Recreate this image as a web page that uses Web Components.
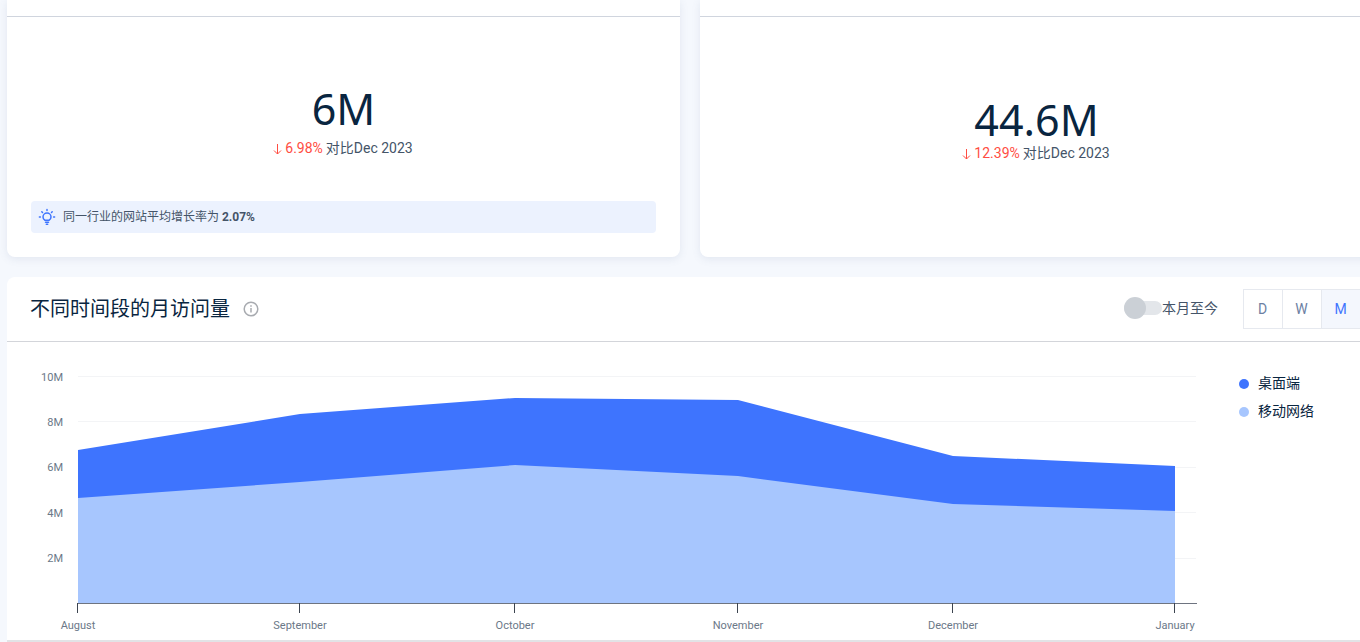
<!DOCTYPE html>
<html>
<head>
<meta charset="utf-8">
<style>
  html, body { margin: 0; height: 642px; overflow: hidden; }
  body {
    background: #f5f8fd;
    font-family: Roboto, "Noto Sans CJK SC", sans-serif;
    color: #445468;
  }
  #page { display: flex; flex-direction: column; gap: 20px; padding-left: 7px; width: 1353px; overflow: hidden; }
  #top { display: flex; gap: 20px; }
</style>
</head>
<body>
<div id="page">
  <div id="top">
    <stat-card value="6M" change="6.98%" style="width:673px">
      <tip-box>同一行业的网站平均增长率为 <b>2.07%</b></tip-box>
    </stat-card>
    <stat-card value="44.6M" change="12.39%" style="width:673px"></stat-card>
  </div>
  <chart-card></chart-card>
</div>

<script>
const FONT = 'Roboto, "Noto Sans CJK SC", sans-serif';

class StatCard extends HTMLElement {
  constructor() {
    super();
    this.attachShadow({ mode: 'open' });
    const big = this.getAttribute('value').length > 3;
    this.shadowRoot.innerHTML = `
      <style>
        :host { display: block; flex: none; }
        #card {
          height: 257px; box-sizing: border-box; display: flex; flex-direction: column;
          background: #fff; border-radius: 0 0 8px 8px; box-shadow: 0 2px 8px rgba(90,110,150,.12);
        }
        #head { height: 16px; border-bottom: 1px solid #d0d5de; flex: none; }
        #body { flex: 1; display: flex; flex-direction: column; align-items: center; padding-top: ${big ? 80 : 67}px; }
        #num { font: 43px/${big ? 46 : 50}px "Noto Sans", sans-serif; color: #092540; }
        #sub { font: 14px/20px ${FONT}; color: #445468; margin-top: ${big ? 0 : 4}px; padding-right: 1px; display: flex; align-items: center; }
        #pct { color: #ff4d42; margin-right: 3px; display: flex; align-items: center; gap: 3px; }
        #pct svg { display: block; margin-top: 2px; }
        #foot { padding: 0 24px 24px; }
      </style>
      <div id="card">
        <div id="head"></div>
        <div id="body">
          <div id="num">${this.getAttribute('value')}</div>
          <div id="sub">
            <span id="pct">
              <svg width="9" height="12" viewBox="0 0 9 12" fill="none" stroke="#ff4d42" stroke-width="1"><path d="M4.5 1v10M1 7.5l3.500 3.500L8 7.500"/></svg>
              ${this.getAttribute('change')}
            </span>
            对比Dec 2023
          </div>
        </div>
        <div id="foot"><slot></slot></div>
      </div>`;
  }
}
customElements.define('stat-card', StatCard);

class TipBox extends HTMLElement {
  constructor() {
    super();
    this.attachShadow({ mode: 'open' });
    this.shadowRoot.innerHTML = `
      <style>
        :host { display: flex; align-items: center; height: 32px; background: #ecf2fe; border-radius: 4px; padding-left: 7px; gap: 7px; font: 12px/16px ${FONT}; color: #445468; }
        svg { flex: none; }
      </style>
      <svg width="18" height="20" viewBox="0 0 18 20" fill="none" stroke="#3e74fe" stroke-width="1.500" stroke-linecap="round">
        <path d="M6.800 13.200C5.600 12.400 5 11.200 5 10a4 4 0 0 1 8 0c0 1.200-.6 2.400-1.800 3.200z"/>
        <path d="M7.500 15.300h3M8.300 17.300h1.400M9 2.400v1M3.800 4.800l.7.7M14.200 4.800l-.7.7M1.400 10h1M15.600 10h1"/>
      </svg>
      <span><slot></slot></span>`;
  }
}
customElements.define('tip-box', TipBox);

class ToggleSwitch extends HTMLElement {
  constructor() {
    super();
    this.attachShadow({ mode: 'open' });
    this.shadowRoot.innerHTML = `
      <style>
        :host { display: flex; align-items: center; }
        #track { width: 38px; height: 14px; border-radius: 7px; background: #e3e6ea; position: relative; }
        #knob { position: absolute; left: 0; top: -4px; width: 22px; height: 22px; border-radius: 50%; background: #cbd0d6; }
        span { font: 14px/20px ${FONT}; color: #445468; }
      </style>
      <div id="track"><div id="knob"></div></div>
      <span><slot></slot></span>`;
  }
}
customElements.define('toggle-switch', ToggleSwitch);

class PeriodTabs extends HTMLElement {
  constructor() {
    super();
    this.attachShadow({ mode: 'open' });
    this.shadowRoot.innerHTML = `
      <style>
        :host { display: flex; flex: none; height: 40px; border: 1px solid #e6e9ef; border-right: 0; box-sizing: border-box; }
        div { width: 39px; box-sizing: border-box; padding-right: 1px; display: flex; align-items: center; justify-content: center; font: 14px ${FONT}; color: #6c7fa3; border-right: 1px solid #e6e9ef; }
        div.on { color: #3e74fe; background: #f4f7fd; }
      </style>
      <div>D</div><div>W</div><div class="on">M</div>`;
  }
}
customElements.define('period-tabs', PeriodTabs);

class AreaChart extends HTMLElement {
  constructor() {
    super();
    this.attachShadow({ mode: 'open' });
    // pixel values read off the chart, origin at the svg's top-left (page y 342)
    const xs = [78, 300, 515, 738, 953, 1175].map(x => x - 7);
    const off = 342;
    const desk = [450, 414, 398, 400, 456, 466].map(y => y - off);
    const mob = [498, 482, 465, 476, 504, 511].map(y => y - off);
    const base = 603 - off;
    const area = ys => `M${xs[0]} ${base} ` + xs.map((x, i) => `L${x} ${ys[i]}`).join(' ') + ` L${xs[5]} ${base}Z`;
    const names = ['August', 'September', 'October', 'November', 'December', 'January'];
    const grid = [[376, '10M'], [421.4, '8M'], [466.8, '6M'], [512.2, '4M'], [557.6, '2M']];
    this.shadowRoot.innerHTML = `
      <style>
        :host { display: block; }
        svg { display: block; }
        text { font: 11px ${FONT}; fill: #6b7888; }
      </style>
      <svg width="1200" height="298" viewBox="0 0 1200 298">
        ${grid.map(([y, t]) => `
          <line x1="71" x2="1189" y1="${Math.round(y) - off + .5}" y2="${Math.round(y) - off + .5}" stroke="#f3f4f6"/>
          <text x="56" y="${y - off + 4.6}" text-anchor="end">${t}</text>`).join('')}
        <path d="${area(desk)}" fill="#3e74fe"/>
        <path d="${area(mob)}" fill="#a7c6fe"/>
        <line x1="70" x2="1190" y1="${base + .5}" y2="${base + .5}" stroke="#6e7480"/>
        ${xs.map((x, i) => `
          <line x1="${x - .5}" x2="${x - .5}" y1="${base}" y2="${base + 10}" stroke="#3c4450"/>
          <text x="${x}" y="${base + 26}" text-anchor="middle">${names[i]}</text>`).join('')}
      </svg>`;
  }
}
customElements.define('area-chart', AreaChart);

class ChartLegend extends HTMLElement {
  constructor() {
    super();
    this.attachShadow({ mode: 'open' });
    this.shadowRoot.innerHTML = `
      <style>
        :host { display: flex; flex-direction: column; gap: 8px; font: 14px/20px ${FONT}; color: #092540; padding-top: 31px; }
        div { display: flex; align-items: center; gap: 9px; }
        i { width: 10px; height: 10px; border-radius: 50%; margin-top: 2px; }
      </style>
      <div><i style="background:#3e74fe"></i>桌面端</div>
      <div><i style="background:#a7c6fe"></i>移动网络</div>`;
  }
}
customElements.define('chart-legend', ChartLegend);

class ChartCard extends HTMLElement {
  constructor() {
    super();
    this.attachShadow({ mode: 'open' });
    this.shadowRoot.innerHTML = `
      <style>
        :host { display: block; }
        #card { background: #fff; border-radius: 8px 0 0 0; border-bottom: 2px solid #e2e3e6; height: 365px; box-sizing: border-box; }
        #head { height: 65px; box-sizing: border-box; border-bottom: 1px solid #d3d5da; display: flex; align-items: center; padding: 0 0 0 23px; }
        h2 { margin: 0; font: 400 20px/24px ${FONT}; color: #092540; }
        #info { margin-left: 13px; flex: none; }
        toggle-switch { margin-left: auto; margin-right: 25px; margin-bottom: 2px; }
        period-tabs { margin-right: -1px; }
        #main { display: flex; }
        chart-legend { margin-left: 32px; }
      </style>
      <div id="card">
        <div id="head">
          <h2>不同时间段的月访问量</h2>
          <svg id="info" width="16" height="16" viewBox="0 0 16 16" fill="none" stroke="#a8abb0" stroke-width="1.500">
            <circle cx="8" cy="8" r="6.800"/><path d="M8 7v4.500M8 4.200v1.600"/>
          </svg>
          <toggle-switch>本月至今</toggle-switch>
          <period-tabs></period-tabs>
        </div>
        <div id="main">
          <area-chart></area-chart>
          <chart-legend></chart-legend>
        </div>
      </div>`;
  }
}
customElements.define('chart-card', ChartCard);
</script>
</body>
</html>
